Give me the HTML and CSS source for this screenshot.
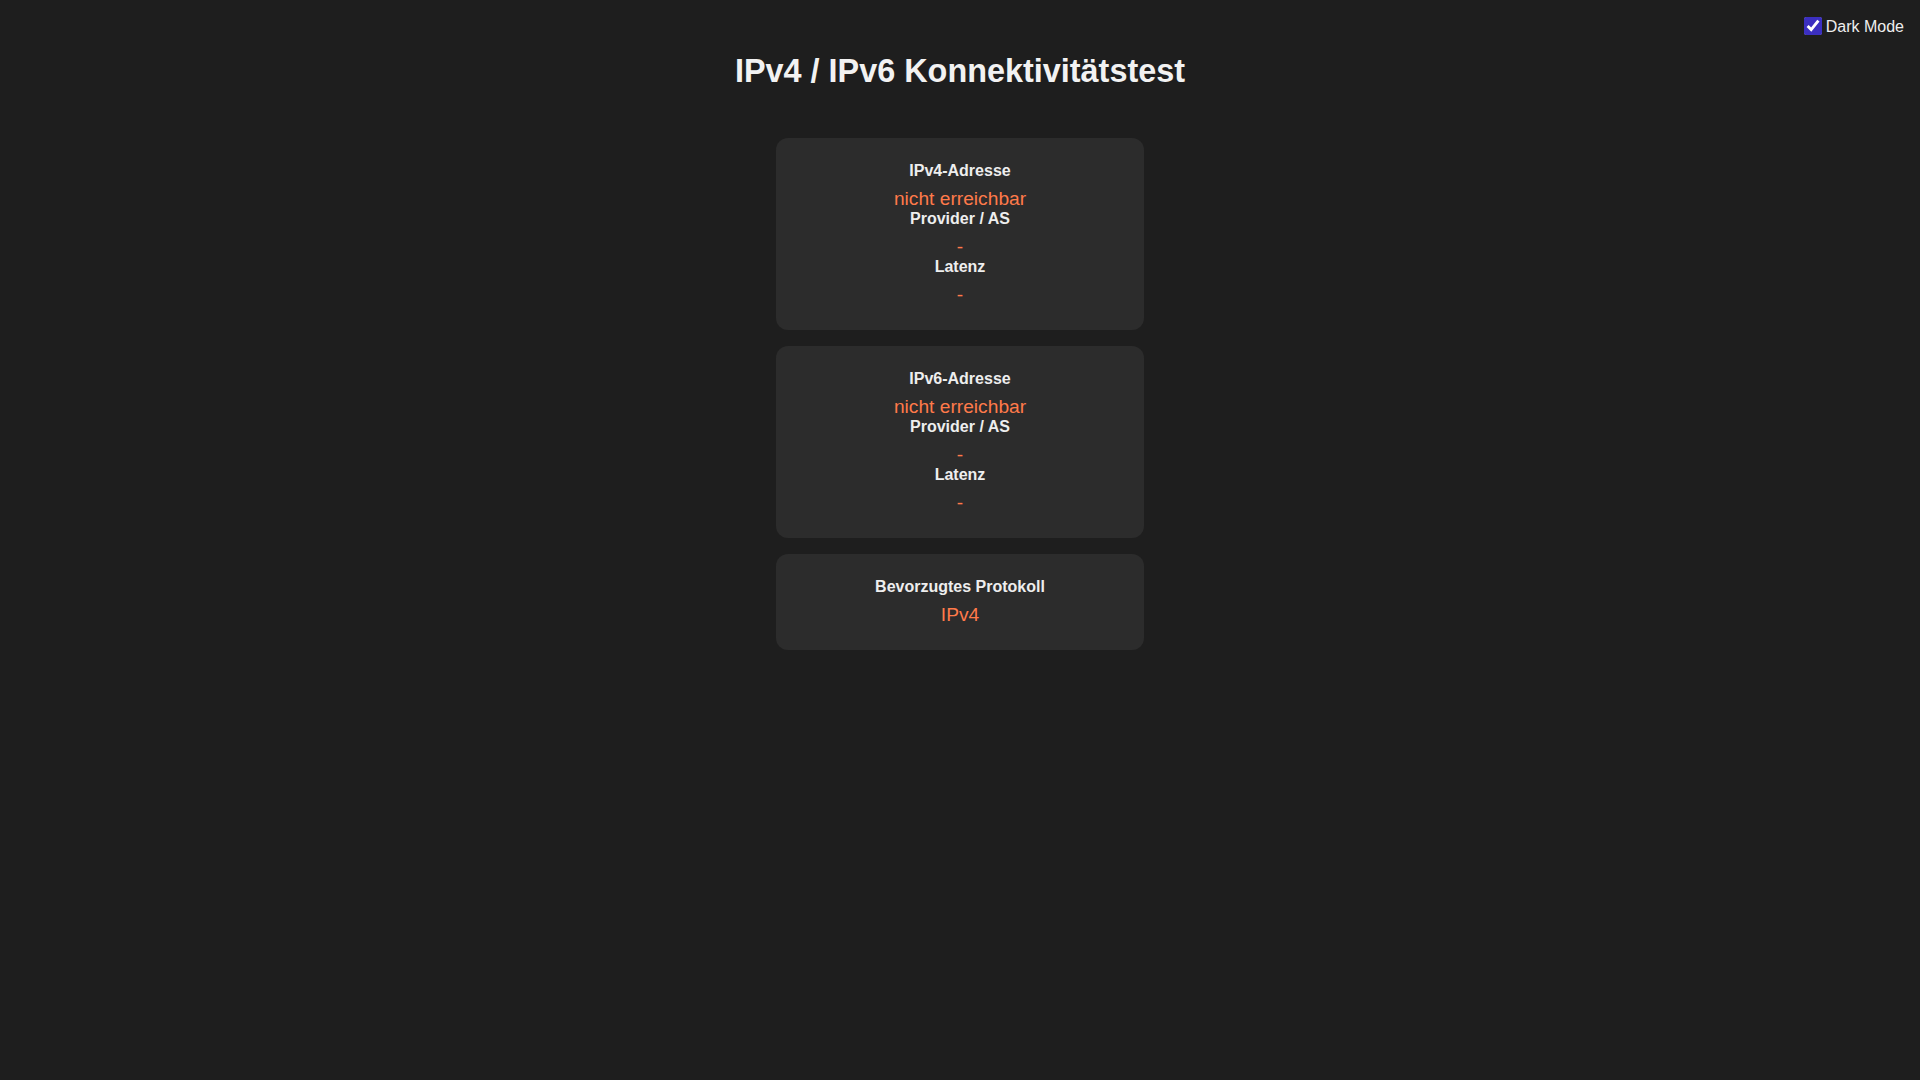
FILE: index.html
```html
<!DOCTYPE html>
<html lang="de">
<head>
<meta charset="utf-8">
<title>IPv4 / IPv6 Konnektivitätstest</title>
<link rel="stylesheet" href="styles.css">
</head>
<body>
<div class="topbar">
  <label class="toggle"><input type="checkbox" checked> <span>Dark Mode</span></label>
</div>
<h1 class="title">IPv4 / IPv6 Konnektivitätstest</h1>
<main class="cards">
  <section class="card">
    <div class="label">IPv4-Adresse</div>
    <div class="value">nicht erreichbar</div>
    <div class="label">Provider / AS</div>
    <div class="value">-</div>
    <div class="label">Latenz</div>
    <div class="value">-</div>
  </section>
  <section class="card">
    <div class="label">IPv6-Adresse</div>
    <div class="value">nicht erreichbar</div>
    <div class="label">Provider / AS</div>
    <div class="value">-</div>
    <div class="label">Latenz</div>
    <div class="value">-</div>
  </section>
  <section class="card">
    <div class="label">Bevorzugtes Protokoll</div>
    <div class="value">IPv4</div>
  </section>
</main>
</body>
</html>
```
FILE: styles.css
```css
html, body {
  margin: 0;
  padding: 0;
}
body {
  background: #1e1e1e;
  color: #eeeeee;
  font-family: "Liberation Sans", Arial, sans-serif;
  font-size: 16px;
}
.topbar {
  display: flex;
  justify-content: flex-end;
  padding: 17px 16px 0 0;
}
.toggle {
  display: flex;
  align-items: center;
  gap: 4px;
  height: 18px;
  color: #eeeeee;
  font-size: 16px;
}
.toggle span {
  position: relative;
  top: 1px;
}
.toggle input {
  width: 18px;
  height: 18px;
  margin: 0;
  accent-color: #3b2fc0;
}
.title {
  margin: 18px 0 48px;
  font-size: 32.4px;
  font-weight: bold;
  text-align: center;
  color: #f2f2f2;
}
.cards {
  display: flex;
  flex-direction: column;
  align-items: center;
  gap: 16px;
}
.card {
  box-sizing: border-box;
  width: 368px;
  padding: 24px 20px 24px;
  background: #2c2c2c;
  border-radius: 12px;
  text-align: center;
}
.label {
  font-weight: bold;
  margin-bottom: 8px;
  color: #eeeeee;
}
.value {
  font-size: 19.2px;
  color: #ff7a4a;
}
```
